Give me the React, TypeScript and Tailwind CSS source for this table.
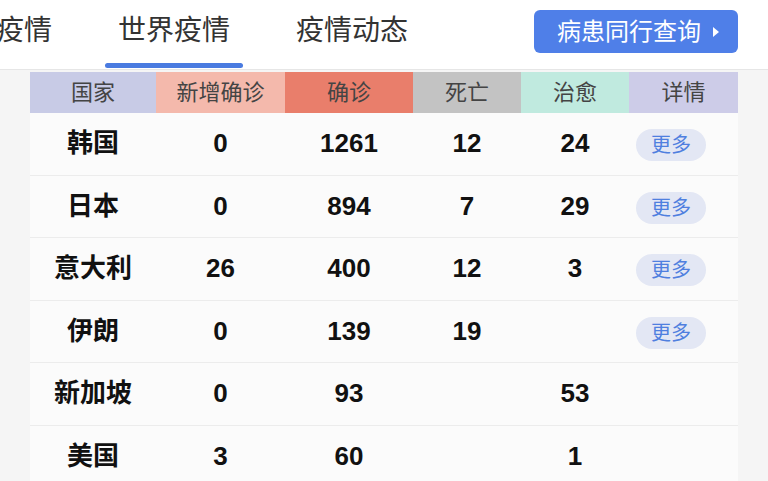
import React from 'react';

interface Row {
    name: string;
    added: string;
    confirmed: string;
    dead: string;
    cured: string;
    more: boolean;
}

const rows: Row[] = [
    { name: '韩国', added: '0', confirmed: '1261', dead: '12', cured: '24', more: true },
    { name: '日本', added: '0', confirmed: '894', dead: '7', cured: '29', more: true },
    { name: '意大利', added: '26', confirmed: '400', dead: '12', cured: '3', more: true },
    { name: '伊朗', added: '0', confirmed: '139', dead: '19', cured: '', more: true },
    { name: '新加坡', added: '0', confirmed: '93', dead: '', cured: '53', more: false },
    { name: '美国', added: '3', confirmed: '60', dead: '', cured: '1', more: false },
];

const font = { fontFamily: '"Liberation Sans", "Noto Sans CJK SC", sans-serif' };

export default function App() {
    return (
        <div className="w-[768px] h-[481px] overflow-hidden bg-[#f5f5f5] text-[#333]" style={font}>
            {/* Top tabs */}
            <div className="h-[70px] bg-white border-b border-[#e6e6e6] flex justify-between">
                <div className="flex gap-[40px] ml-[-17px] h-full">
                    <div className="w-[82px] flex flex-col items-center">
                        <span className="text-[28px] leading-none mt-[17px] text-[#333]">疫情</span>
                    </div>
                    <div className="w-[138px] flex flex-col items-center">
                        <span className="text-[28px] leading-none mt-[17px] text-[#333]">世界疫情</span>
                        <div className="mt-auto mb-[1px] w-full h-[5px] rounded-full bg-[#4a7be0]" />
                    </div>
                    <div className="w-[138px] flex flex-col items-center">
                        <span className="text-[28px] leading-none mt-[17px] text-[#333]">疫情动态</span>
                    </div>
                </div>
                <button className="self-start mt-[10px] mr-[30px] w-[204px] h-[43px] rounded-[6px] bg-[#4f7fe8] text-white text-[24px] flex items-center justify-center gap-[12px] pl-[4px]">
                    <span>病患同行查询</span>
                    <span className="w-0 h-0 border-y-[5px] border-y-transparent border-l-[6px] border-l-white" />
                </button>
            </div>

            {/* Table */}
            <div className="ml-[30px] w-[708px] mt-[2px] bg-[#fbfbfb]">
                <div className="flex h-[41px] text-[22px] text-[#444]">
                    <div className="w-[126px] bg-[#c8cbe6] flex items-center justify-center">国家</div>
                    <div className="w-[129px] bg-[#f4b9ac] flex items-center justify-center">新增确诊</div>
                    <div className="w-[128px] bg-[#e97e6b] flex items-center justify-center">确诊</div>
                    <div className="w-[108px] bg-[#c3c3c3] flex items-center justify-center">死亡</div>
                    <div className="w-[108px] bg-[#c0eadf] flex items-center justify-center">治愈</div>
                    <div className="w-[109px] bg-[#cdcce8] flex items-center justify-center">详情</div>
                </div>
                {rows.map((r) => (
                    <div key={r.name} className="flex h-[62.5px] items-center border-b border-[#ececec] text-[26px] font-bold text-[#111]">
                        <div className="w-[126px] text-center">{r.name}</div>
                        <div className="w-[129px] text-center">{r.added}</div>
                        <div className="w-[128px] text-center">{r.confirmed}</div>
                        <div className="w-[108px] text-center">{r.dead}</div>
                        <div className="w-[108px] text-center">{r.cured}</div>
                        <div className="w-[109px] pl-[7px]">
                            {r.more && (
                                <span className="inline-flex items-center justify-center w-[70px] h-[32px] rounded-full bg-[#e3e7f4] text-[#4f7fdf] text-[20px] font-normal">
                                    更多
                                </span>
                            )}
                        </div>
                    </div>
                ))}
            </div>
        </div>
    );
}
